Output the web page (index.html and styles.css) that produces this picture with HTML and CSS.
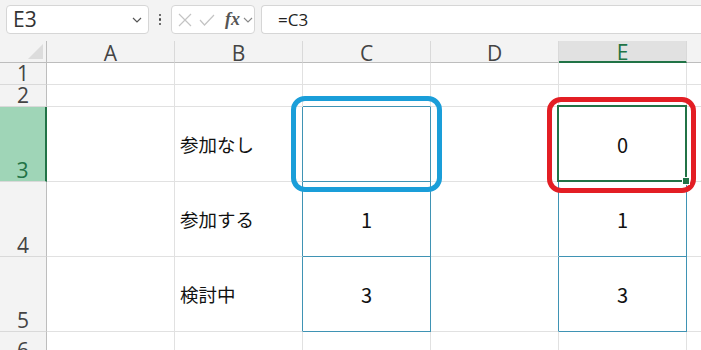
FILE: index.html
```html
<!DOCTYPE html>
<html lang="ja">

<head>
    <meta charset="UTF-8">
    <title>Sheet1</title>
    <link rel="stylesheet" href="styles.css">
</head>

<body>
    <!-- formula bar -->
    <div class="toolbar">
        <div class="namebox">
            <span>E3</span>
            <svg class="chev" width="10" height="6" viewBox="0 0 10 6"><path d="M1 1 L5 5 L9 1" fill="none" stroke="#555" stroke-width="1.2"/></svg>
        </div>
        <div class="dots">
            <span></span><span></span><span></span>
        </div>
        <div class="fxbox">
            <svg width="14" height="14" viewBox="0 0 14 14"><path d="M1 1 L13 13 M13 1 L1 13" stroke="#c4c4c4" stroke-width="1.2" fill="none"/></svg>
            <svg width="16" height="14" viewBox="0 0 16 14"><path d="M1 7 L5.5 12 L15 2" stroke="#c4c4c4" stroke-width="1.2" fill="none"/></svg>
            <span class="fx">fx</span>
            <svg width="10" height="6" viewBox="0 0 10 6"><path d="M1 1 L5 5 L9 1" fill="none" stroke="#888" stroke-width="1.1"/></svg>
        </div>
        <div class="formula">=C3</div>
    </div>

    <!-- grid -->
    <div class="sheet-wrap">
        <div class="sheet">
            <div class="corner"><span class="tri"></span></div>
            <div class="colhead">A</div>
            <div class="colhead">B</div>
            <div class="colhead">C</div>
            <div class="colhead">D</div>
            <div class="colhead active">E</div>
            <div class="colhead last"></div>

            <div class="rowhead">1</div>
            <div class="cell"></div><div class="cell"></div><div class="cell"></div><div class="cell"></div><div class="cell"></div><div class="cell last"></div>

            <div class="rowhead">2</div>
            <div class="cell"></div><div class="cell"></div><div class="cell tb"></div><div class="cell"></div><div class="cell"></div><div class="cell last"></div>

            <div class="rowhead active">3</div>
            <div class="cell"></div>
            <div class="cell tr text">参加なし</div>
            <div class="cell box num"></div>
            <div class="cell tr"></div>
            <div class="cell box num selected">0<span class="handle"></span></div>
            <div class="cell last"></div>

            <div class="rowhead">4</div>
            <div class="cell"></div>
            <div class="cell tr text">参加する</div>
            <div class="cell box num">1</div>
            <div class="cell tr"></div>
            <div class="cell box num">1</div>
            <div class="cell last"></div>

            <div class="rowhead">5</div>
            <div class="cell"></div>
            <div class="cell tr text">検討中</div>
            <div class="cell box num">3</div>
            <div class="cell tr"></div>
            <div class="cell box num">3</div>
            <div class="cell last"></div>

            <div class="rowhead">6</div>
            <div class="cell"></div><div class="cell"></div><div class="cell"></div><div class="cell"></div><div class="cell"></div><div class="cell last"></div>
        </div>

        <!-- callouts drawn over the sheet -->
        <div class="mark mark-blue"></div>
        <div class="mark mark-red"></div>
    </div>
</body>

</html>
```

FILE: styles.css
```css
body {
    margin: 0;
    padding: 0;
    width: 701px;
    height: 350px;
    overflow: hidden;
    background-color: #fff;
    font-family: "Open Sans", "Noto Sans CJK JP", sans-serif;
    color: #222;
}

.toolbar {
    display: flex;
    align-items: center;
    height: 41px;
    padding: 0 0 2px 6px;
    box-sizing: border-box;
    background-color: #f3f3f3;
}

.namebox {
    display: flex;
    align-items: center;
    justify-content: space-between;
    width: 143px;
    height: 29px;
    box-sizing: border-box;
    padding: 0 6px 0 6px;
    background-color: #fff;
    border: 1px solid #d6d6d6;
    border-radius: 4px;
    font-size: 21px;
    color: #333;
}

.namebox span {
    line-height: 1;
}

.dots {
    display: flex;
    flex-direction: column;
    gap: 2px;
    width: 22px;
    align-items: center;
}

.dots span {
    width: 2.5px;
    height: 2.5px;
    background-color: #444;
    border-radius: 50%;
}

.fxbox {
    display: flex;
    align-items: center;
    gap: 7px;
    width: 84px;
    height: 29px;
    box-sizing: border-box;
    padding-left: 6px;
    background-color: #fff;
    border: 1px solid #d6d6d6;
    border-radius: 4px;
}

.fx {
    font-family: "Liberation Serif", serif;
    font-style: italic;
    font-weight: bold;
    font-size: 18px;
    color: #555;
    margin-left: 3px;
    margin-right: -4px;
}

.formula {
    flex: 1;
    height: 29px;
    margin-left: 6px;
    box-sizing: border-box;
    padding-left: 16px;
    background-color: #fff;
    border: 1px solid #d6d6d6;
    border-right: none;
    border-radius: 4px 0 0 4px;
    font-size: 17px;
    line-height: 27px;
    color: #222;
}

.sheet-wrap {
    position: relative;
}

.sheet {
    display: grid;
    grid-template-columns: 47px repeat(5, 128px) 1fr;
    grid-template-rows: 22px 22px 22px 75px 75px 75px 30px;
}

.corner {
    position: relative;
    background-color: #f3f3f3;
    border-right: 1px solid #bdbdbd;
    border-bottom: 1px solid #bdbdbd;
}

.tri {
    position: absolute;
    right: 3px;
    bottom: 3px;
    width: 0;
    height: 0;
    border-left: 15px solid transparent;
    border-bottom: 15px solid #dcdcdc;
}

.colhead {
    display: flex;
    justify-content: center;
    align-items: center;
    background-color: #f3f3f3;
    border-right: 1px solid #d9d9d9;
    border-bottom: 1px solid #bdbdbd;
    font-size: 21px;
    color: #444;
    line-height: 1;
    padding-top: 3px;
}

.colhead.active {
    background-color: #e1e1e1;
    border-bottom: 2px solid #217346;
    color: #217346;
}

.colhead.last,
.cell.last {
    border-right: none;
}

.rowhead {
    display: flex;
    justify-content: center;
    align-items: flex-end;
    background-color: #f3f3f3;
    border-right: 1px solid #bdbdbd;
    border-bottom: 1px solid #d9d9d9;
    font-size: 21px;
    line-height: 1;
    color: #444;
    padding-bottom: 0;
}

.rowhead.active {
    background-color: #9fd5b7;
    border-right: 2px solid #217346;
    color: #217346;
}

.cell {
    position: relative;
    display: flex;
    align-items: center;
    border-right: 1px solid #e1e1e1;
    border-bottom: 1px solid #e1e1e1;
}

.cell.text {
    padding-left: 5px;
    font-family: "Noto Sans CJK JP", sans-serif;
    font-size: 18.5px;
    color: #111;
}

.cell.num {
    justify-content: center;
    font-family: "Noto Sans CJK JP", sans-serif;
    font-size: 20px;
    color: #111;
}

/* light blue borders round C3:C5 and E3:E5 */
.cell.box {
    border-right-color: #3f93b4;
    border-bottom-color: #3f93b4;
}

.cell.tr {
    border-right-color: #3f93b4;
}

.cell.tb {
    border-bottom-color: #3f93b4;
}

.cell.selected::after {
    content: "";
    position: absolute;
    top: -2px;
    left: -2px;
    right: -1px;
    bottom: -1px;
    border: 2px solid #217346;
}

.handle {
    position: absolute;
    right: -4px;
    bottom: -4px;
    width: 6px;
    height: 6px;
    background-color: #217346;
    border: 1px solid #fff;
    z-index: 2;
}

.mark {
    position: absolute;
    box-sizing: border-box;
    border-radius: 14px;
    border-width: 5px;
    border-style: solid;
    pointer-events: none;
}

.mark-blue {
    left: 291px;
    top: 55px;
    width: 151px;
    height: 96px;
    border-color: #1a9ed9;
}

.mark-red {
    left: 547px;
    top: 56px;
    width: 149px;
    height: 96px;
    border-color: #e31e24;
}
```
